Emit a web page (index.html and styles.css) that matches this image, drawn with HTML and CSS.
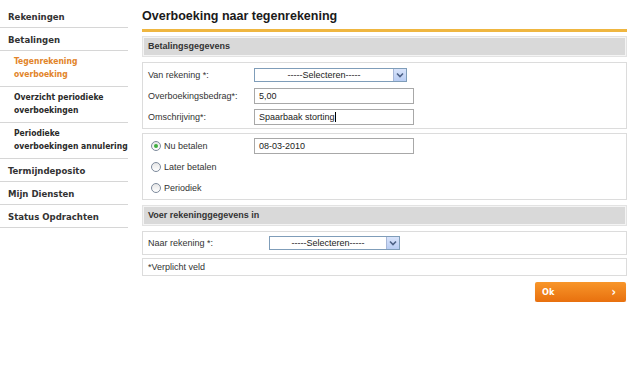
FILE: index.html
```html
<!DOCTYPE html>
<html lang="nl">
<head>
<meta charset="utf-8">
<title>Overboeking naar tegenrekening</title>
<link rel="stylesheet" href="styles.css">
</head>
<body>
<div class="page">
  <nav class="sidebar">
    <div class="nav-item">Rekeningen</div>
    <div class="nav-item">Betalingen</div>
    <div class="nav-sub active">Tegenrekening<br>overboeking</div>
    <div class="nav-sub">Overzicht periodieke<br>overboekingen</div>
    <div class="nav-sub">Periodieke<br>overboekingen annulering</div>
    <div class="nav-item">Termijndeposito</div>
    <div class="nav-item">Mijn Diensten</div>
    <div class="nav-item">Status Opdrachten</div>
  </nav>
  <main class="main">
    <h1 class="title">Overboeking naar tegenrekening</h1>
    <div class="rule"></div>
    <div class="section-head">Betalingsgegevens</div>
    <div class="box box-form">
      <div class="row">
        <span class="label">Van rekening *:</span>
        <div class="select sel-wide"><span class="sel-text">-----Selecteren-----</span><span class="sel-btn"><svg width="8" height="6" viewBox="0 0 8 6"><path d="M1 1.5 L4 4.5 L7 1.5" fill="none" stroke="#4d6185" stroke-width="1.6"/></svg></span></div>
      </div>
      <div class="row">
        <span class="label">Overboekingsbedrag*:</span>
        <div class="input">5,00</div>
      </div>
      <div class="row">
        <span class="label">Omschrijving*:</span>
        <div class="input">Spaarbaak storting<span class="caret"></span></div>
      </div>
    </div>
    <div class="box box-radio">
      <div class="row">
        <span class="label radio-label"><span class="radio checked"></span>Nu betalen</span>
        <div class="input">08-03-2010</div>
      </div>
      <div class="row">
        <span class="label radio-label"><span class="radio"></span>Later betalen</span>
      </div>
      <div class="row">
        <span class="label radio-label"><span class="radio"></span>Periodiek</span>
      </div>
    </div>
    <div class="section-head head-2">Voer rekeninggegevens in</div>
    <div class="box box-naar">
      <div class="row row-naar">
        <span class="label label-naar">Naar rekening *:</span>
        <div class="select sel-narrow"><span class="sel-text">-----Selecteren-----</span><span class="sel-btn"><svg width="8" height="6" viewBox="0 0 8 6"><path d="M1 1.5 L4 4.5 L7 1.5" fill="none" stroke="#4d6185" stroke-width="1.6"/></svg></span></div>
      </div>
    </div>
    <div class="box box-note">*Verplicht veld</div>
    <div class="actions">
      <button class="btn-ok"><span>Ok</span><span class="chev">&#8250;</span></button>
    </div>
  </main>
</div>
</body>
</html>
```
FILE: styles.css
```css
* { box-sizing: border-box; }
body {
  margin: 0;
  background: #fff;
  font-family: "Liberation Sans", Arial, sans-serif;
  color: #333;
}
.page {
  display: flex;
  align-items: flex-start;
}
.sidebar {
  width: 128px;
  flex: none;
  padding-top: 5px;
  font-family: "DejaVu Sans Condensed", "DejaVu Sans", sans-serif;
  font-weight: bold;
}
.nav-item {
  font-size: 9.5px;
  line-height: 13px;
  padding: 5px 0 4px 8px;
  color: #333;
  border-bottom: 1px solid #d6d6d6;
}
.nav-sub {
  font-size: 8.5px;
  line-height: 13px;
  padding: 4px 0 5px 14px;
  color: #2a2a2a;
  white-space: nowrap;
  border-bottom: 1px solid #d6d6d6;
}
.nav-sub.active { color: #e2842a; }

.main {
  width: 485px;
  margin-left: 14px;
}
.title {
  margin: 0;
  padding-top: 8px;
  font-size: 12.5px;
  line-height: 16px;
  font-weight: bold;
  color: #1a1a1a;
}
.rule {
  height: 3px;
  margin-top: 5px;
  background: #efb640;
}
.section-head {
  margin-top: 4px;
  height: 21px;
  line-height: 19px;
  padding-left: 5px;
  font-size: 9px;
  font-weight: bold;
  color: #333;
  background: #d9d9d9;
  border: 1px solid #e3e3e3;
  box-shadow: inset 0 0 0 1px #f4f4f4;
}
.head-2 { margin-top: 5px; }
.box {
  border: 1px solid #dcdcdc;
  margin-top: 5px;
  font-size: 9px;
  color: #333;
}
.box-form { padding: 1px 0; }
.box-radio { margin-top: 4px; padding: 1px 0; }
.box-naar { margin-top: 5px; padding: 0; }
.box-note {
  margin-top: 3px;
  height: 18px;
  line-height: 16px;
  padding-left: 5px;
}
.row {
  display: flex;
  align-items: center;
  height: 21px;
  padding-left: 5px;
}
.row-naar { height: 22px; }
.label {
  width: 106px;
  flex: none;
}
.label-naar { width: 121px; }
.radio-label {
  display: flex;
  align-items: center;
  padding-left: 3px;
}
.radio {
  width: 10px;
  height: 10px;
  border-radius: 50%;
  border: 1px solid #7d8a9c;
  background: linear-gradient(#e6e6e6, #fff);
  margin-right: 3px;
  position: relative;
  flex: none;
}
.radio.checked::after {
  content: "";
  position: absolute;
  left: 2px;
  top: 2px;
  width: 4px;
  height: 4px;
  border-radius: 50%;
  background: #3fae3f;
}
.input {
  width: 160px;
  height: 16px;
  border: 1px solid #a8a8a8;
  line-height: 14px;
  padding-left: 4px;
  font-size: 9px;
  color: #222;
  background: #fff;
}
.caret {
  display: inline-block;
  width: 1px;
  height: 10px;
  background: #000;
  vertical-align: -2px;
}
.select {
  display: flex;
  height: 14px;
  border: 1px solid #7f9db9;
  background: #fff;
  font-size: 9px;
  color: #222;
}
.sel-wide { width: 153px; }
.sel-narrow { width: 131px; }
.sel-text {
  flex: 1;
  text-align: center;
  line-height: 12px;
}
.sel-btn {
  width: 13px;
  height: 12px;
  display: flex;
  align-items: center;
  justify-content: center;
  background: linear-gradient(#d9e4fb, #b9cdf3);
  border-left: 1px solid #a8b8d8;
}
.actions {
  display: flex;
  justify-content: flex-end;
  margin-top: 6px;
  padding-right: 1px;
}
.btn-ok {
  width: 91px;
  height: 20px;
  border: none;
  border-radius: 2px;
  background: linear-gradient(#f8962a, #e8700e);
  color: #fff;
  font-family: "DejaVu Sans Condensed", "DejaVu Sans", sans-serif;
  font-weight: bold;
  font-size: 9px;
  display: flex;
  align-items: center;
  justify-content: space-between;
  padding: 0 10px 0 7px;
  box-shadow: 0 1px 1px rgba(0,0,0,0.15);
}
.chev { font-size: 12px; line-height: 12px; }
```
